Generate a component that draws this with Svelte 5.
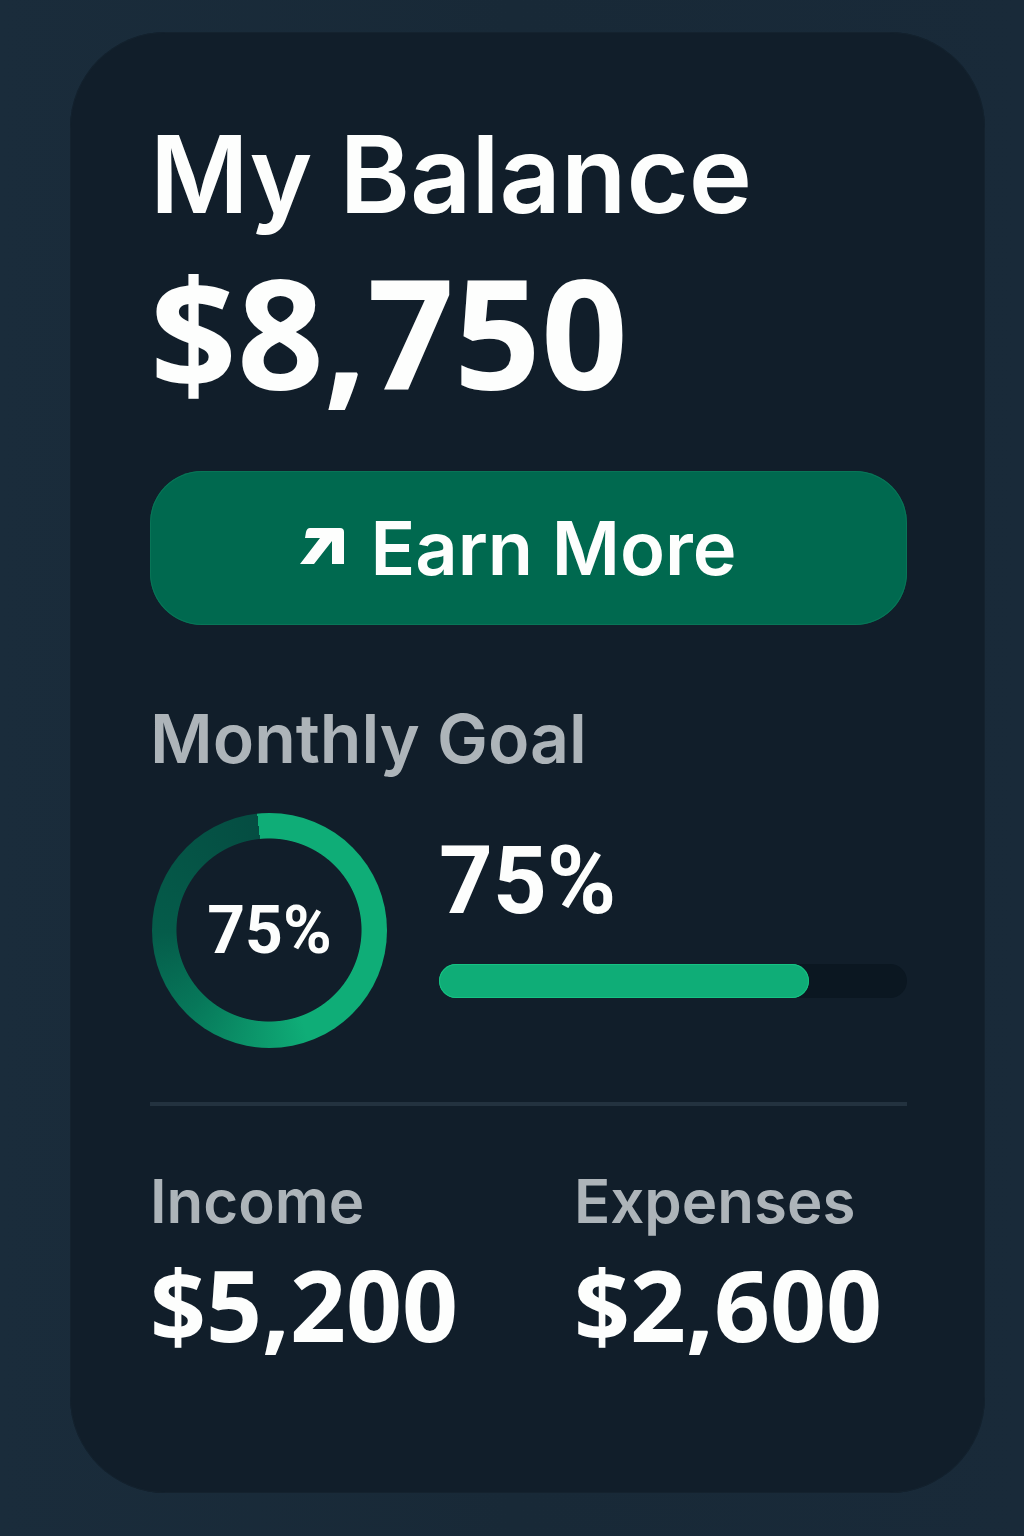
<script>
  const goal = { label: '75%', value: 75, fill: 79 };
  const totals = [
    { label: 'Income', amount: '$5,200' },
    { label: 'Expenses', amount: '$2,600' }
  ];
</script>

<main class="page">
  <section class="card" aria-labelledby="balance-title">
    <h1 id="balance-title" class="title">My Balance</h1>
    <p class="balance">$8,750</p>

    <button class="earn" type="button">
      <svg class="arrow" viewBox="0 0 44 40" aria-hidden="true">
        <path d="M9 0H40Q44 0 44 4V36H32V13L14 36H0L20 10H5L6 4Q7 0 10 0Z" fill="currentColor" />
      </svg>
      <span>Earn More</span>
    </button>

    <h2 class="subtitle" id="goal-title">Monthly Goal</h2>
    <div class="goal">
      <div class="ring"><span class="ring-value">{goal.label}</span></div>
      <div class="progress">
        <p class="percent">{goal.label}</p>
        <div
          class="track"
          role="progressbar"
          aria-labelledby="goal-title"
          aria-valuenow={goal.value}
          aria-valuemin="0"
          aria-valuemax="100"
        >
          <div class="fill" style="width: {goal.fill}%"></div>
        </div>
      </div>
    </div>

    <hr class="divider" />

    <dl class="totals">
      {#each totals as item}
        <div>
          <dt class="label">{item.label}</dt>
          <dd class="amount">{item.amount}</dd>
        </div>
      {/each}
    </dl>
  </section>
</main>

<style>
  :global(body) {
    margin: 0;
    background: #182a38;
  }

  .page {
    box-sizing: border-box;
    min-height: 100vh;
    padding: 32px 39px 43px 70px;
    background: linear-gradient(90deg, #1a2c3b, #182937 50%, #192a39);
    color: #fdfefd;
    font-family: Inter, 'Liberation Sans', sans-serif;
    font-weight: 600;
  }

  .card {
    box-sizing: border-box;
    padding: 82px 78px 139px 80px;
    border-radius: 96px;
    background: #111e2a;
    box-shadow: inset 0 0 0 1px #14222e;
  }

  h1, h2, p, dl, dd {
    margin: 0;
    font-weight: inherit;
  }

  .title {
    font-size: 107px;
    line-height: 120px;
  }

  .balance,
  .amount {
    font-family: 'Open Sans', 'Liberation Sans', sans-serif;
    font-weight: 700;
  }

  .percent,
  .ring-value {
    font-family: Roboto, 'Liberation Sans', sans-serif;
    font-weight: 700;
  }

  .balance {
    margin-top: 18px;
    font-size: 152px;
    line-height: 160px;
  }

  .earn {
    display: flex;
    align-items: center;
    justify-content: center;
    gap: 26px;
    width: 100%;
    margin-top: 59px;
    padding: 32px 52px 32px 32px;
    border: 0;
    border-radius: 52px;
    background: #00694f;
    box-shadow: inset 0 0 0 1px #087557;
    color: inherit;
    font: 600 74px/90px Inter, 'Liberation Sans', sans-serif;
  }

  .arrow {
    width: 44px;
    height: 40px;
  }

  .subtitle,
  .label {
    color: #adb4b9;
  }

  .subtitle {
    margin-top: 73px;
    font-size: 68px;
    line-height: 80px;
  }

  .goal {
    display: flex;
    align-items: flex-start;
    gap: 52px;
    margin-top: 35px;
    padding-left: 2px;
  }

  .ring {
    display: grid;
    flex: none;
    place-items: center;
    width: 235px;
    height: 235px;
    border-radius: 50%;
    background:
      radial-gradient(93px 92px at 117px 117px, #111e2a 99%, transparent 100%),
      conic-gradient(from -6deg, #0fad77 0deg 166deg, #07785a 230deg, #055c4a 275deg, #054d42 360deg);
  }

  .ring-value {
    font-size: 66px;
    line-height: 80px;
  }

  .progress {
    flex: 1;
    padding-top: 14px;
  }

  .percent {
    font-size: 94px;
    line-height: 108px;
  }

  .track {
    height: 34px;
    margin-top: 29px;
    border-radius: 17px;
    background: #0b1721;
  }

  .fill {
    height: 100%;
    border-radius: 17px;
    background: #0fad77;
    box-shadow: inset 0 0 0 1px #17c283;
  }

  .divider {
    height: 4px;
    margin: 54px 0 59px;
    border: 0;
    background: #23323f;
  }

  .totals {
    display: grid;
    grid-template-columns: 56% 1fr;
  }

  .label {
    font-size: 60px;
    line-height: 72px;
  }

  .amount {
    margin-top: 17px;
    font-size: 98px;
    line-height: 100px;
  }
</style>
